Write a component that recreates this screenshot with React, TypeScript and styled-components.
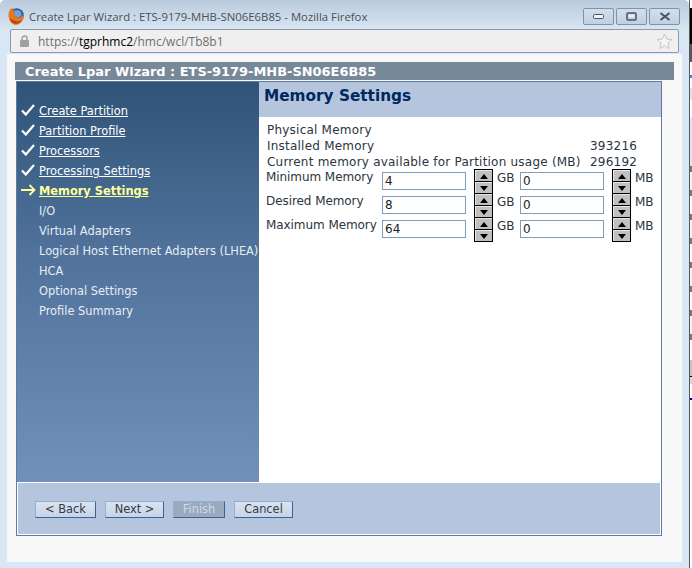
import React from 'react';
import styled, {createGlobalStyle} from 'styled-components';

const GlobalStyle = createGlobalStyle`
  html, body {
    margin: 0;
    padding: 0;
    background: #ffffff;
  }
`

const Screen = styled.div`
  display: flex;
  width: 692px;
  height: 568px;
  overflow: hidden;
`

const Window = styled.div`
  display: flex;
  flex-direction: column;
  width: 689px;
  height: 568px;
  padding: 0 7px 6px 7px;
  box-sizing: border-box;
  flex-shrink: 0;
  border-top-right-radius: 5px;
  border-top-left-radius: 5px;
  background: linear-gradient(#b9cbdc 0, #d9e6f3 30px, #dae6f3 100%);
`

// what shows of the page behind the popup
const BehindStrip = styled.div`
  display: flex;
  flex-direction: column;
  width: 3px;
  height: 568px;
  box-sizing: border-box;
  border-left: 1px solid #555a60;
  background: #ffffff;
`

const BehindBand = styled.div<{$height: number; $color: string}>`
  height: ${p => p.$height}px;
  flex-shrink: 0;
  background: ${p => p.$color};
`

const TitleBar = styled.div`
  display: flex;
  align-items: center;
  height: 29px;
  padding-top: 3px;
  box-sizing: border-box;
  font-family: "Open Sans", sans-serif;
  font-size: 11.35px;
  color: #4a5057;
`

const TitleText = styled.span`
  margin-left: 4px;
  flex: 1;
`

const Controls = styled.div`
  display: flex;
  gap: 2px;
  margin-right: 2px;
  margin-top: 1px;
`

const ControlButton = styled.div`
  display: flex;
  align-items: center;
  justify-content: center;
  width: 31px;
  height: 17px;
  box-sizing: border-box;
  border: 1px solid #7f93aa;
  border-radius: 2px;
  background: linear-gradient(#d3dfea, #c0d0e0);
`

const UrlBar = styled.div`
  display: flex;
  align-items: center;
  height: 24px;
  margin: 0 3px 0 3px;
  padding: 0 5px 0 8px;
  box-sizing: border-box;
  border: 1px solid #8b99ab;
  border-radius: 2px;
  background: #efefef;
  font-family: "Open Sans", sans-serif;
  font-size: 12px;
  color: #6f6f6f;
`

const UrlText = styled.span`
  margin-left: 8px;
  flex: 1;
  b {
    font-weight: normal;
    color: #000000;
  }
`

const Page = styled.div`
  flex: 1;
  display: flex;
  flex-direction: column;
  margin-top: 1px;
  padding: 8px 8px 26px 8px;
  background: #f8f8f8;
`

const WizardTitle = styled.div`
  height: 18px;
  line-height: 19px;
  padding-left: 10px;
  background: #778899;
  font-family: "DejaVu Sans", sans-serif;
  font-size: 12.95px;
  font-weight: bold;
  color: #ffffff;
`

const Wizard = styled.div`
  display: flex;
  flex-direction: column;
  width: 646px;
  margin: 1px 0 0 1px;
  height: 455px;
  box-sizing: border-box;
  border: 1px solid #5d7aa3;
  background: #ffffff;
`

const Body = styled.div`
  flex: 1;
  display: flex;
  min-height: 0;
`

const Sidebar = styled.div`
  display: flex;
  flex-direction: column;
  width: 242px;
  padding-top: 19px;
  box-sizing: border-box;
  background: linear-gradient(#2f5478 0, #4e7099 40%, #7191bb 100%);
  font-family: "DejaVu Sans", sans-serif;
  font-size: 11.4px;
`

const StepRow = styled.div`
  display: flex;
  align-items: center;
  height: 20px;
`

const StepMark = styled.div`
  display: flex;
  align-items: center;
  justify-content: center;
  width: 22px;
  height: 20px;
  margin-top: -2px;
  flex-shrink: 0;
`

const StepLabel = styled.span<{$state: 'done' | 'current' | 'todo'}>`
  white-space: nowrap;
  color: ${p => (p.$state === 'current' ? '#ffff99' : p.$state === 'done' ? '#ffffff' : '#e8edf3')};
  font-weight: ${p => (p.$state === 'current' ? 'bold' : 'normal')};
  text-decoration: ${p => (p.$state === 'todo' ? 'none' : 'underline')};
`

const Content = styled.div`
  flex: 1;
  display: flex;
  flex-direction: column;
`

const Heading = styled.div`
  height: 35px;
  padding: 5px 0 0 5px;
  box-sizing: border-box;
  background: #b4c5dd;
  font-family: "DejaVu Sans", sans-serif;
  font-size: 15.3px;
  font-weight: bold;
  color: #00285f;
`

const Form = styled.div`
  padding: 5px 0 0 8px;
  font-family: "DejaVu Sans", sans-serif;
  font-size: 12px;
  color: #2c3440;
`

const InfoRow = styled.div`
  display: flex;
  height: 16px;
  line-height: 16px;
  letter-spacing: 0.22px;
`

const InfoLabel = styled.span`
  width: 323px;
  flex-shrink: 0;
  white-space: nowrap;
`

const MemoryRow = styled.div`
  display: flex;
  align-items: flex-start;
  height: 24px;
  margin-left: -1px;
`

const MemoryLabel = styled.span`
  width: 116px;
  line-height: 14px;
  flex-shrink: 0;
  white-space: nowrap;
  letter-spacing: -0.07px;
`

const NumberInput = styled.div`
  width: 84px;
  height: 18px;
  margin-top: 2px;
  padding-left: 2px;
  box-sizing: border-box;
  border: 1px solid #7f9db9;
  line-height: 17px;
  font-family: "DejaVu Sans", sans-serif;
  font-size: 12px;
  color: #222222;
  background: #ffffff;
`

const Spinner = styled.div`
  display: flex;
  flex-direction: column;
  justify-content: space-between;
  width: 19px;
  height: 25px;
  margin: -1px 4px 0 8px;
  padding: 1px;
  box-sizing: border-box;
  background: #000000;
`

const SpinnerButton = styled.div`
  display: flex;
  align-items: center;
  justify-content: center;
  height: 11px;
  background: #c0c0c0;
  border-top: 1px solid #e8e8e8;
  border-left: 1px solid #e8e8e8;
  box-sizing: border-box;
`

const Unit = styled.span`
  width: 23px;
  margin-top: 1px;
  line-height: 14px;
  flex-shrink: 0;
`

const Footer = styled.div`
  display: flex;
  align-items: center;
  gap: 9px;
  height: 52px;
  margin: 0 1px 1px 0;
  padding: 1px 0 0 17px;
  box-sizing: border-box;
  border-top: 1px solid #ffffff;
  border-left: 1px solid #ffffff;
  background: #b4c5dd;
`

const Button = styled.div<{$width: number; $disabled?: boolean}>`
  width: ${p => p.$width}px;
  height: 17px;
  line-height: 15px;
  text-align: center;
  box-sizing: border-box;
  border-top: 1px solid #8fb0d2;
  border-left: 1px solid #8fb0d2;
  border-right: 1px solid #336699;
  border-bottom: 1px solid #336699;
  font-family: "DejaVu Sans", sans-serif;
  font-size: 11.4px;
  color: ${p => (p.$disabled ? '#d4dae2' : '#333a48')};
  background: ${p => (p.$disabled ? '#98a9c0' : 'linear-gradient(#dbe3ef, #c7d3e6)')};
`

const FirefoxLogo = () => (
  <svg width="18" height="18" viewBox="0 0 16 16">
    <circle cx="8.5" cy="7.500" r="6.500" fill="#2a5fa8" />
    <circle cx="9.500" cy="6" r="3.200" fill="#6fa3dc" />
    <path d="M1.500 9C.8 5 2.500 2 5 .5 4.600 2 5 3 5.600 3.400 6.600 2.600 8 2.600 9 3 6.800 3.400 5.800 5 6.400 7c.6 2 3.200 3 5.400 2 1.200-.6 2-1.600 2.200-2.600.8 1 1 2.800.4 4.400C13 13.600 10.500 15.800 8 15.800 4.500 15.800 2.100 12.800 1.500 9z" fill="#e8761a" />
    <path d="M2.500 10c1 3.200 3 4.800 5.500 4.800 2.200 0 4.200-1 5.300-3-2 1.300-5 1.500-7 .3C5 11.300 3.500 10.800 2.500 10z" fill="#b93c0c" />
  </svg>
)

const LockIcon = () => (
  <svg width="11" height="12" viewBox="0 0 11 12">
    <path d="M3 5.500V3.500a2.500 2.500 0 0 1 5 0v2" fill="none" stroke="#a0a0a0" strokeWidth="1.500" />
    <rect x="1" y="5" width="9" height="7" rx="1" fill="#a0a0a0" />
  </svg>
)

const StarIcon = () => (
  <svg width="17" height="17" viewBox="0 0 17 17">
    <path d="M8.500 1l2.200 5 5.300.5-4 3.500 1.200 5.500-4.700-2.800-4.700 2.800L5 10 1 6.500 6.300 6z" fill="#f4f4f4" stroke="#c6c6c6" />
  </svg>
)

const CheckIcon = () => (
  <svg width="14" height="12" viewBox="0 0 14 12">
    <path d="M1 6.500L4.800 10.500 13 1" fill="none" stroke="#ffffff" strokeWidth="2.200" />
  </svg>
)

const ArrowIcon = () => (
  <svg width="15" height="12" viewBox="0 0 15 12">
    <path d="M0 6h13.500M8.500 1l5 5-5 5" fill="none" stroke="#ffff99" strokeWidth="1.800" />
  </svg>
)

const steps: {label: string; state: 'done' | 'current' | 'todo'}[] = [
  {label: 'Create Partition', state: 'done'},
  {label: 'Partition Profile', state: 'done'},
  {label: 'Processors', state: 'done'},
  {label: 'Processing Settings', state: 'done'},
  {label: 'Memory Settings', state: 'current'},
  {label: 'I/O', state: 'todo'},
  {label: 'Virtual Adapters', state: 'todo'},
  {label: 'Logical Host Ethernet Adapters (LHEA)', state: 'todo'},
  {label: 'HCA', state: 'todo'},
  {label: 'Optional Settings', state: 'todo'},
  {label: 'Profile Summary', state: 'todo'},
]

const memoryRows = [
  {label: 'Minimum Memory', gb: '4'},
  {label: 'Desired Memory', gb: '8'},
  {label: 'Maximum Memory', gb: '64'},
]

// rows of the page behind, top to bottom
const behindBands: {height: number; color: string}[] = [
  {height: 8, color: '#ffffff'},
  {height: 36, color: '#000000'},
  {height: 18, color: '#55585c'},
  {height: 13, color: '#ffffff'},
  {height: 3, color: '#3f86d8'},
  {height: 10, color: '#ffffff'},
  {height: 12, color: '#dfe3e8'},
  {height: 17, color: '#ffffff'},
  {height: 49, color: '#e2e6ee'},
  ...Array.from({length: 8}, (_, i) => [
    {height: 6, color: '#8a6f6a'},
    {height: 18, color: i % 2 ? '#ffffff' : '#f2f3f5'},
  ]).flat(),
  {height: 2, color: '#ffffff'},
  {height: 16, color: '#c4c4c4'},
  {height: 1, color: '#000000'},
  {height: 7, color: '#d8d8d8'},
  {height: 14, color: '#ffffff'},
  {height: 2, color: '#000080'},
]

const SpinnerControl = () => (
  <Spinner>
    <SpinnerButton>
      <svg width="8" height="5" viewBox="0 0 8 5"><path d="M4 0l4 5H0z" fill="#000" /></svg>
    </SpinnerButton>
    <SpinnerButton>
      <svg width="8" height="5" viewBox="0 0 8 5"><path d="M0 0h8L4 5z" fill="#000" /></svg>
    </SpinnerButton>
  </Spinner>
)

const App = () => {
  return (
    <Screen>
      <GlobalStyle />
      <Window>
        <TitleBar>
          <FirefoxLogo />
          <TitleText>Create Lpar Wizard : ETS-9179-MHB-SN06E6B85 - Mozilla Firefox</TitleText>
          <Controls>
            <ControlButton>
              <svg width="11" height="5" viewBox="0 0 11 5"><rect x=".5" y=".5" width="10" height="4" rx="1" fill="#eef3f8" stroke="#44536a" /></svg>
            </ControlButton>
            <ControlButton>
              <svg width="11" height="9" viewBox="0 0 11 9"><rect x="1" y="1" width="9" height="7" rx="1" fill="none" stroke="#44536a" strokeWidth="1.500" /><rect x="3" y="3" width="5" height="2" fill="#eef3f8" /></svg>
            </ControlButton>
            <ControlButton>
              <svg width="12" height="9" viewBox="0 0 12 9"><path d="M1.500 1l9 7M10.500 1l-9 7" stroke="#44536a" strokeWidth="2" /></svg>
            </ControlButton>
          </Controls>
        </TitleBar>
        <UrlBar>
          <LockIcon />
          <UrlText>https://<b>tgprhmc2</b>/hmc/wcl/Tb8b1</UrlText>
          <StarIcon />
        </UrlBar>
        <Page>
          <WizardTitle>Create Lpar Wizard : ETS-9179-MHB-SN06E6B85</WizardTitle>
          <Wizard>
            <Body>
              <Sidebar>
                {steps.map(step => (
                  <StepRow key={step.label}>
                    <StepMark>
                      {step.state === 'done' && <CheckIcon />}
                      {step.state === 'current' && <ArrowIcon />}
                    </StepMark>
                    <StepLabel $state={step.state}>{step.label}</StepLabel>
                  </StepRow>
                ))}
              </Sidebar>
              <Content>
                <Heading>Memory Settings</Heading>
                <Form>
                  <InfoRow><InfoLabel>Physical Memory</InfoLabel></InfoRow>
                  <InfoRow><InfoLabel>Installed Memory</InfoLabel>393216</InfoRow>
                  <InfoRow><InfoLabel>Current memory available for Partition usage (MB)</InfoLabel>296192</InfoRow>
                  {memoryRows.map(row => (
                    <MemoryRow key={row.label}>
                      <MemoryLabel>{row.label}</MemoryLabel>
                      <NumberInput>{row.gb}</NumberInput>
                      <SpinnerControl />
                      <Unit>GB</Unit>
                      <NumberInput>0</NumberInput>
                      <SpinnerControl />
                      <Unit>MB</Unit>
                    </MemoryRow>
                  ))}
                </Form>
              </Content>
            </Body>
            <Footer>
              <Button $width={61}>&lt; Back</Button>
              <Button $width={59}>Next &gt;</Button>
              <Button $width={52} $disabled>Finish</Button>
              <Button $width={59}>Cancel</Button>
            </Footer>
          </Wizard>
        </Page>
      </Window>
      <BehindStrip>
        {behindBands.map((band, i) => (
          <BehindBand key={i} $height={band.height} $color={band.color} />
        ))}
      </BehindStrip>
    </Screen>
  );
};

export default App;
